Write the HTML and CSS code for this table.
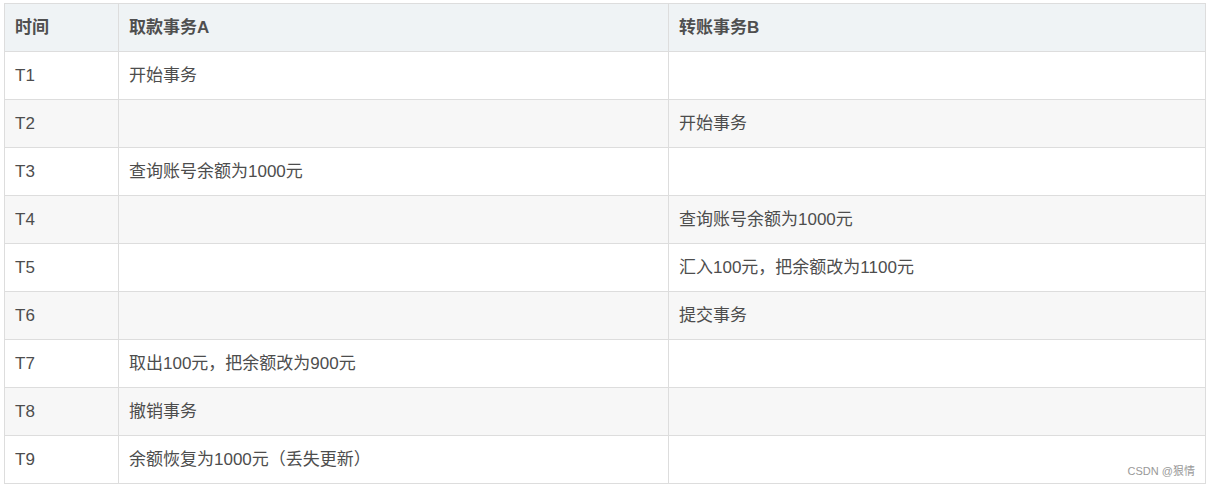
FILE: index.html
```html
<!DOCTYPE html>
<html lang="zh">
<head>
<meta charset="utf-8">
<link rel="stylesheet" href="styles.css">
</head>
<body>
<div class="wrap">
<table class="tbl">
<colgroup><col class="c1"><col class="c2"><col class="c3"></colgroup>
<thead>
<tr><th>时间</th><th>取款事务A</th><th>转账事务B</th></tr>
</thead>
<tbody>
<tr><td>T1</td><td>开始事务</td><td></td></tr>
<tr><td>T2</td><td></td><td>开始事务</td></tr>
<tr><td>T3</td><td>查询账号余额为1000元</td><td></td></tr>
<tr><td>T4</td><td></td><td>查询账号余额为1000元</td></tr>
<tr><td>T5</td><td></td><td>汇入100元，把余额改为1100元</td></tr>
<tr><td>T6</td><td></td><td>提交事务</td></tr>
<tr><td>T7</td><td>取出100元，把余额改为900元</td><td></td></tr>
<tr><td>T8</td><td>撤销事务</td><td></td></tr>
<tr><td>T9</td><td>余额恢复为1000元（丢失更新）</td><td></td></tr>
</tbody>
</table>
<div class="mark">CSDN @狠情</div>
</div>
</body>
</html>
```
FILE: styles.css
```css
html, body { margin: 0; padding: 0; background: #fff; }
body { font-family: "Liberation Sans", "Noto Sans CJK SC", sans-serif; color: #4d4d4d; }
.wrap { position: relative; padding: 3px 4px; width: 1202px; }
.tbl { border-collapse: collapse; width: 1202px; table-layout: fixed; font-size: 17px; }
.c1 { width: 114px; }
.c2 { width: 550px; }
.c3 { width: 537px; }
.tbl th, .tbl td { border: 1px solid #dddddd; padding: 11px 10px; line-height: 25px; height: 25px; text-align: left; vertical-align: middle; }
.tbl th { background: #eff3f5; font-weight: bold; color: #4f4f4f; }
.tbl tbody tr:nth-child(even) td { background: #f7f7f7; }
.mark { position: absolute; right: 15px; bottom: 9px; font-size: 11px; color: #999; font-family: "Liberation Sans", "Noto Sans CJK SC", sans-serif; }
```
